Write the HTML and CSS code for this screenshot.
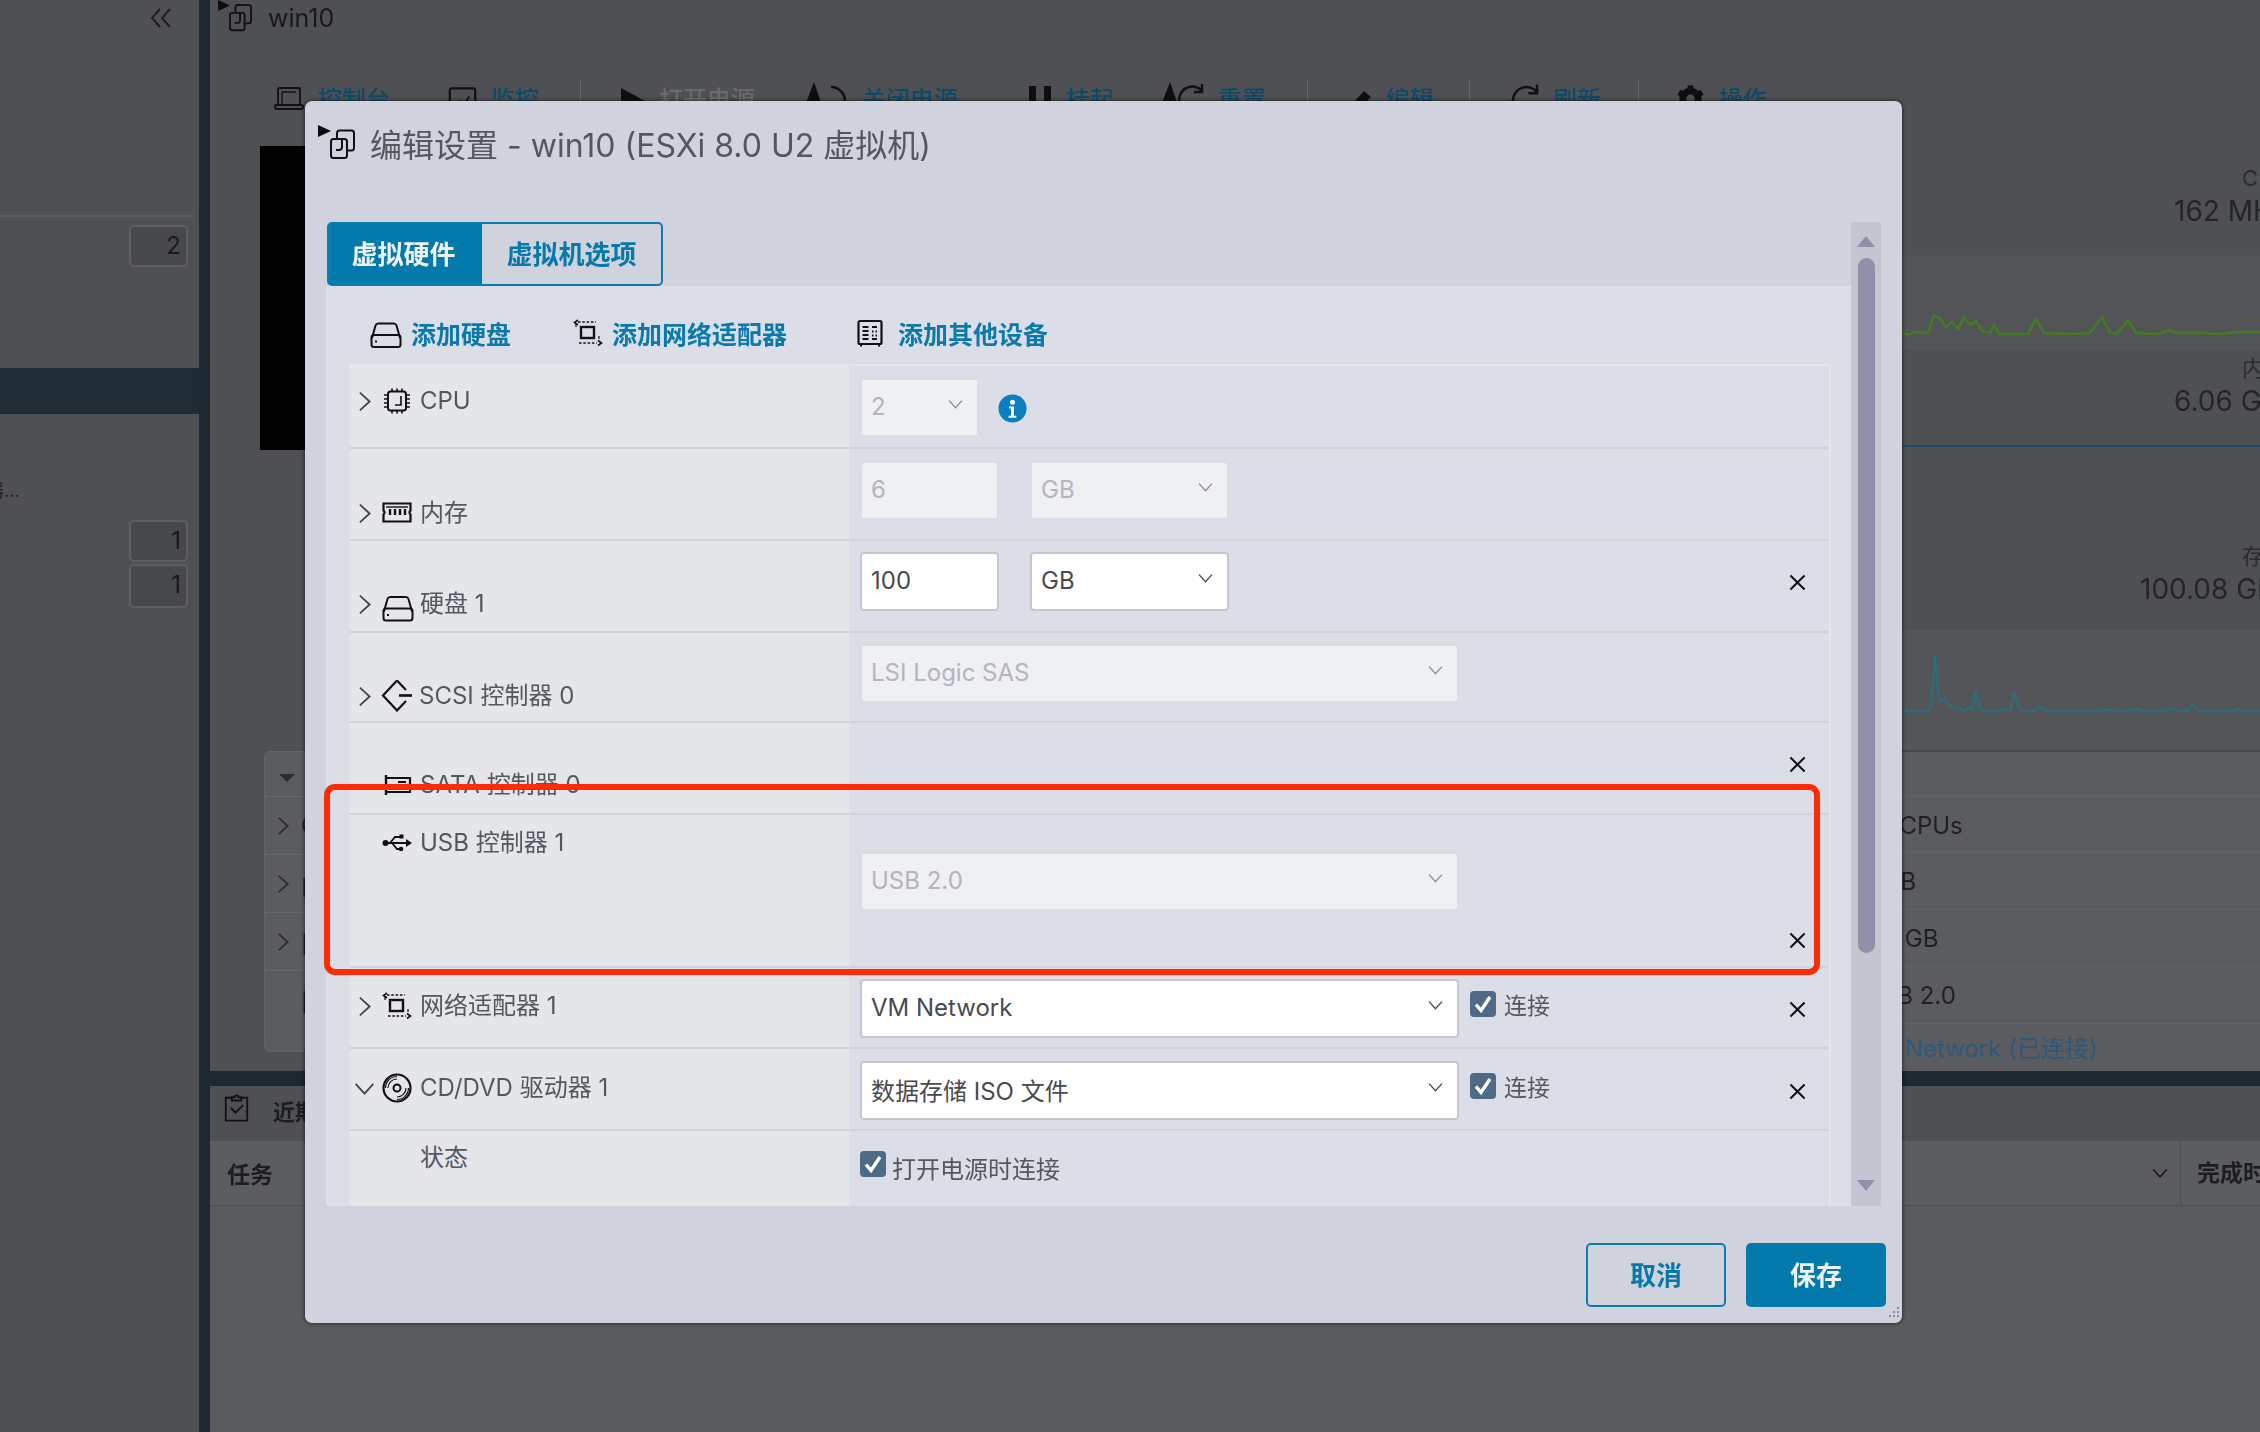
FILE: index.html
```html
<!DOCTYPE html>
<html lang="zh-CN">
<head>
    <meta charset="UTF-8">
    <title>编辑设置 - win10</title>
    <link rel="stylesheet" href="styles.css">
</head>
<body>
    <!-- Icon sprite -->
    <svg class="sprite" xmlns="http://www.w3.org/2000/svg">
        <symbol id="i-vm" viewBox="0 0 37 36">
            <polygon points="0,0 13,6 0,12" fill="#0c0c10" stroke="none"/>
            <path d="M19 13V8a2.5 2.5 0 0 1 2.5-2.5h12A2.5 2.5 0 0 1 36 8v15a2.5 2.5 0 0 1-2.5 2.5H28"/>
            <rect x="13" y="14" width="16" height="19" rx="2.5"/>
            <path d="M24 14v8a3 3 0 0 1-3 3h-3"/>
        </symbol>
        <symbol id="i-hdd" viewBox="0 0 32 26">
            <path d="M2 16L5.5 3.5A3 3 0 0 1 8.400 1.500h15.200a3 3 0 0 1 2.900 2l3.500 12.500"/>
            <rect x="1.500" y="13" width="29" height="12" rx="2.500"/>
            <path d="M5 19.500h2"/>
        </symbol>
        <symbol id="i-net" viewBox="0 0 30 28">
            <rect x="8" y="8" width="13" height="11" stroke-width="2.400"/>
            <path d="M5 3h18" stroke-dasharray="2.500 1.800" stroke-width="1.600"/>
            <path d="M5 1L1.500 3.500 5 6" stroke-width="1.600"/>
            <path d="M6 24h18" stroke-dasharray="2.500 1.800" stroke-width="1.600"/>
            <path d="M25 21.500l3.500 2.500-3.500 2.500" stroke-width="1.600"/>
            <path d="M3 4v4M26 20v-3" stroke-width="1.200"/>
        </symbol>
        <symbol id="i-other" viewBox="0 0 26 28">
            <rect x="1.500" y="2" width="23" height="23" rx="1.500" stroke-width="2.200"/>
            <path d="M5.500 8h6M5.500 12h6M5.500 16h6M5.500 20h6M15 8h5M15 20h5" stroke-width="1.800"/>
            <path d="M15 12.500h1.500M18.500 12.500H20M15 16.500h1.500M18.500 16.500H20" stroke-width="2"/>
            <path d="M4 26v1.500M22 26v1.500" stroke-width="2"/>
        </symbol>
        <symbol id="i-cpu" viewBox="0 0 28 26">
            <rect x="5" y="3.500" width="18" height="19" rx="2.500" stroke-width="2"/>
            <path d="M1 7h4M1 11h4M1 15h4M1 19h4M23 7h4M23 11h4M23 15h4M23 19h4M9 0.500v3M14 0.500v3M19 0.500v3M9 22.500v3M14 22.500v3M19 22.500v3" stroke-width="1.600"/>
            <path d="M18 8v9h-6" stroke-width="1.600"/>
        </symbol>
        <symbol id="i-mem" viewBox="0 0 30 21">
            <path d="M1.500 1.500h27v7a2.500 2.500 0 0 0 0 4v7h-27v-7a2.500 2.500 0 0 0 0-4z" stroke-width="2.200"/>
            <path d="M4 5h22" stroke-width="1.400"/>
            <path d="M8 7v6M13 7v6M18 7v6M23 7v6" stroke-width="2.400"/>
        </symbol>
        <symbol id="i-scsi" viewBox="0 0 32 33">
            <path d="M16 1.500L2 16.500l14 15 9-9.500M25 11L16 1.500" stroke-width="2.200"/>
            <path d="M18 16.500h13" stroke-width="2.600"/>
        </symbol>
        <symbol id="i-sata" viewBox="0 0 28 22">
            <path d="M3 1v20" stroke-width="2.400"/>
            <path d="M3 4h24v14H3" stroke-width="2.200"/>
            <path d="M15 8h8M15 11.500h8" stroke-width="2"/>
        </symbol>
        <symbol id="i-usb" viewBox="0 0 30 20">
            <circle cx="3.500" cy="10" r="3" fill="#111" stroke="none"/>
            <path d="M3 10h23" stroke-width="2"/>
            <polygon points="24,6 30,10 24,14" fill="#111" stroke="none"/>
            <path d="M8 10l5-6h5M10 10l5 6h3" stroke-width="1.800"/>
            <rect x="17.500" y="1.500" width="4" height="4" fill="#111" stroke="none"/>
            <circle cx="19" cy="16" r="2.300" fill="#111" stroke="none"/>
        </symbol>
        <symbol id="i-cd" viewBox="0 0 30 30">
            <circle cx="15" cy="15" r="13.500" stroke-width="2.200"/>
            <circle cx="15" cy="15" r="3.500" stroke-width="2"/>
            <path d="M15 6a9 9 0 0 0-9 9M15 3.500A11.500 11.500 0 0 0 3.500 15M15 24a9 9 0 0 0 9-9M15 26.500A11.500 11.500 0 0 0 26.500 15" stroke-width="1.200"/>
        </symbol>
        <symbol id="i-right" viewBox="0 0 14 22"><path d="M2 1.500L12.500 11 2 20.500"/></symbol>
        <symbol id="i-down" viewBox="0 0 22 14"><path d="M1.500 2L11 12.500 20.500 2"/></symbol>
        <symbol id="i-x" viewBox="0 0 18 18"><path d="M1.500 1.500l15 15M16.500 1.500l-15 15" stroke-width="2.200"/></symbol>
        <symbol id="i-check" viewBox="0 0 26 26"><path d="M6 13.500l5 6L20 6" stroke="#fff" stroke-width="3.400"/></symbol>
        <symbol id="i-info" viewBox="0 0 30 30">
            <circle cx="15" cy="15" r="14.500" fill="#0b7fbd" stroke="none"/>
            <circle cx="15" cy="8.500" r="2.600" fill="#fff" stroke="none"/>
            <path d="M11.500 13h5v9.500h2.500v2h-8v-2h2.500V15h-2z" fill="#fff" stroke="none"/>
        </symbol>
        <symbol id="i-laptop" viewBox="0 0 30 23">
            <path d="M4 18V2.500A1.500 1.500 0 0 1 5.500 1h19A1.500 1.500 0 0 1 26 2.500V18" stroke-width="1.800"/>
            <path d="M8 5h14M8 5v13" stroke-width="1.300"/>
            <rect x="1" y="18" width="28" height="4" rx="1.500" stroke-width="1.800"/>
        </symbol>
        <symbol id="i-chart" viewBox="0 0 30 34">
            <rect x="1.500" y="1.500" width="27" height="31" rx="2" stroke-width="2.400"/>
            <path d="M7 24l5-9 4 6 6-11" stroke-width="2"/>
        </symbol>
        <symbol id="i-play" viewBox="0 0 24 30"><polygon points="0,2 24,15 0,28" fill="#0f0f12" stroke="none"/></symbol>
        <symbol id="i-off" viewBox="0 0 44 30">
            <polygon points="0,26 10,0 19,26" fill="#0f0f12" stroke="none"/>
            <path d="M27 5a14 14 0 0 1 14 14v6" stroke-width="2.400"/>
            <path d="M24 4v22" stroke-width="0"/>
        </symbol>
        <symbol id="i-pause" viewBox="0 0 22 30"><path d="M3.500 0v30M18.500 0v30" stroke="#0f0f12" stroke-width="7"/></symbol>
        <symbol id="i-reset" viewBox="0 0 44 30">
            <polygon points="0,26 10,0 19,26" fill="#0f0f12" stroke="none"/>
            <path d="M20 22a13 13 0 0 1 22-13" stroke-width="2.400"/>
            <path d="M42 2v8h-8" stroke-width="2.400"/>
        </symbol>
        <symbol id="i-pen" viewBox="0 0 24 30"><path d="M2 27l2-9L16 5l7 6-13 13z" fill="#0f0f12" stroke="none"/></symbol>
        <symbol id="i-refresh" viewBox="0 0 30 30">
            <path d="M3 28V18a14 14 0 0 1 25-9" stroke-width="2.600"/>
            <path d="M28 1v9h-9" stroke-width="2.600"/>
        </symbol>
        <symbol id="i-gear" viewBox="0 0 30 30">
            <circle cx="15" cy="16" r="8" fill="none" stroke="#0f0f12" stroke-width="7"/>
            <path d="M15 2v6M3 9l5 3M27 9l-5 3M3 23l5-3M27 23l-5-3" stroke="#0f0f12" stroke-width="6"/>
        </symbol>
        <symbol id="i-tasks" viewBox="0 0 26 30">
            <path d="M8 4H1.500v24.500h23V4H18" stroke-width="2"/>
            <path d="M8 7V3.500h3a2 2 0 0 1 4 0h3V7z" stroke-width="2"/>
            <path d="M7 15l5 5 8-8" stroke-width="2"/>
        </symbol>
    </svg>

    <!-- Sidebar -->
    <aside class="sidebar">
        <div class="collapse">
            <svg class="stroke" width="22" height="20" viewBox="0 0 22 20"><path d="M10 1L2 10l8 9M20 1l-8 9 8 9"/></svg>
        </div>
        <div class="side-line"></div>
        <span class="side-badge">2</span>
        <div class="side-selected"></div>
        <div class="side-text">器...</div>
        <span class="side-badge side-badge-a">1</span>
        <span class="side-badge side-badge-b">1</span>
    </aside>
    <div class="divider"></div>

    <main class="main">
        <section class="vm-view">
            <div class="vm-head">
                <svg class="stroke vm-icon"><use href="#i-vm"/></svg>
                <span>win10</span>
            </div>
            <div class="toolbar">
                <div class="tool first"><svg class="stroke t-laptop"><use href="#i-laptop"/></svg><span>控制台</span></div>
                <div class="tool monitor"><svg class="stroke t-chart"><use href="#i-chart"/></svg><span>监控</span></div>
                <div class="tool-sep"></div>
                <div class="tool off"><svg class="stroke t-play"><use href="#i-play"/></svg><span>打开电源</span></div>
                <div class="tool power"><svg class="stroke t-wide"><use href="#i-off"/></svg><span>关闭电源</span></div>
                <div class="tool wide"><svg class="stroke t-play"><use href="#i-pause"/></svg><span>挂起</span></div>
                <div class="tool"><svg class="stroke t-wide"><use href="#i-reset"/></svg><span>重置</span></div>
                <div class="tool-sep"></div>
                <div class="tool off-blue"><svg class="stroke t-play"><use href="#i-pen"/></svg><span>编辑</span></div>
                <div class="tool-sep sep-refresh"></div>
                <div class="tool off-blue"><svg class="stroke t-round"><use href="#i-refresh"/></svg><span>刷新</span></div>
                <div class="tool-sep sep-gear"></div>
                <div class="tool off-blue"><svg class="stroke t-round"><use href="#i-gear"/></svg><span>操作</span></div>
            </div>
            <div class="vm-body">
                <div class="vm-left">
                    <div class="console-preview"></div>
                    <div class="hw-panel">
                        <div class="hw-head"><span class="tri"></span></div>
                        <div class="hw-row"><svg class="stroke"><use href="#i-right"/></svg><span>CPU</span></div>
                        <div class="hw-row"><svg class="stroke"><use href="#i-right"/></svg><span>内存</span></div>
                        <div class="hw-row"><svg class="stroke"><use href="#i-right"/></svg><span>[硬盘</span></div>
                        <div class="hw-row"><span class="hw-blank">[网络</span></div>
                    </div>
                </div>
                <div class="vm-stats">
                    <div class="stat stat-cpu"><small>CPU</small><b>162 MHz</b></div>
                    <div class="chart chart-cpu">
                        <svg width="358" height="40" viewBox="0 0 358 40"><polyline class="line-green" points="0,28 6,30 12,27 26,28 32,10 38,13 44,22 50,17 56,24 62,12 68,20 74,16 80,26 88,28 92,20 97,29 126,29 134,14 142,28 168,29 188,28 200,12 208,28 216,28 226,15 234,28 258,29 266,25 274,28 300,28 320,29 335,27 358,27"/></svg>
                    </div>
                    <div class="stat stat-mem"><small>内存</small><b>6.06 GB</b></div>
                    <div class="chart chart-mem"></div>
                    <div class="stat stat-disk"><small>存储</small><b>100.08 GB</b></div>
                    <div class="chart chart-disk">
                        <svg width="358" height="122" viewBox="0 0 358 122"><polyline class="line-teal" points="2,81 26,81 29,76 33,25 36,62 38,71 43,68 48,76 54,79 58,78 62,81 66,78 70,80 74,62 78,78 82,81 94,81 100,79 108,81 112,64 118,81 132,81 138,77 146,81 190,81 204,80 226,81 236,79 242,81 262,81 268,78 278,81 286,81 290,73 296,81 330,81 336,79 342,81 358,81"/></svg>
                    </div>
                    <div class="info-table">
                        <div class="info-row info-top"></div>
                        <div class="info-row info-cpu">2 CPUs</div>
                        <div class="info-row info-mem">6 GB</div>
                        <div class="info-row info-disk">100 GB</div>
                        <div class="info-row info-usb">USB 2.0</div>
                        <div class="info-row info-link">VM Network (已连接)</div>
                    </div>
                </div>
            </div>
        </section>
        <div class="hbar"></div>
        <section class="tasks">
            <div class="tasks-head">
                <svg class="stroke t-tasks"><use href="#i-tasks"/></svg>
                <span>近期任务</span>
            </div>
            <div class="tasks-cols">
                <span>任务</span>
                <svg class="stroke tasks-chevron"><use href="#i-down"/></svg>
                <span class="tasks-done">完成时间</span>
            </div>
        </section>
    </main>

    <!-- Edit settings dialog -->
    <div class="modal">
        <div class="modal-title">
            <svg class="stroke modal-icon"><use href="#i-vm"/></svg>
            <span>编辑设置 - win10 (ESXi 8.0 U2 虚拟机)</span>
        </div>
        <div class="modal-body">
            <div class="modal-main">
                <div class="tabs">
                    <div class="tab active">虚拟硬件</div>
                    <div class="tab">虚拟机选项</div>
                </div>
                <div class="panel">
                    <div class="add-bar">
                        <a class="add-link link-disk"><svg class="stroke"><use href="#i-hdd"/></svg>添加硬盘</a>
                        <a class="add-link link-net"><svg class="stroke"><use href="#i-net"/></svg>添加网络适配器</a>
                        <a class="add-link link-other"><svg class="stroke"><use href="#i-other"/></svg>添加其他设备</a>
                    </div>
                    <div class="table">
                        <div class="row r-cpu">
                            <div class="cell-label"><svg class="stroke arrow"><use href="#i-right"/></svg><svg class="stroke dev dev-cpu"><use href="#i-cpu"/></svg><span>CPU</span></div>
                            <div class="cell-ctrl">
                                <div class="select off sel-cpu">2<svg class="stroke chev"><use href="#i-down"/></svg></div>
                                <svg class="info"><use href="#i-info"/></svg>
                            </div>
                        </div>
                        <div class="row r-mem">
                            <div class="cell-label"><svg class="stroke arrow"><use href="#i-right"/></svg><svg class="stroke dev dev-mem"><use href="#i-mem"/></svg><span>内存</span></div>
                            <div class="cell-ctrl">
                                <div class="select off sel-num">6</div>
                                <div class="select off sel-unit">GB<svg class="stroke chev"><use href="#i-down"/></svg></div>
                            </div>
                        </div>
                        <div class="row r-disk">
                            <div class="cell-label"><svg class="stroke arrow"><use href="#i-right"/></svg><svg class="stroke dev dev-hdd"><use href="#i-hdd"/></svg><span>硬盘 1</span></div>
                            <div class="cell-ctrl">
                                <div class="select sel-num">100</div>
                                <div class="select sel-unit">GB<svg class="stroke chev"><use href="#i-down"/></svg></div>
                                <svg class="stroke del"><use href="#i-x"/></svg>
                            </div>
                        </div>
                        <div class="row r-scsi">
                            <div class="cell-label"><svg class="stroke arrow"><use href="#i-right"/></svg><svg class="stroke dev dev-scsi"><use href="#i-scsi"/></svg><span>SCSI 控制器 0</span></div>
                            <div class="cell-ctrl">
                                <div class="select off sel-long">LSI Logic SAS<svg class="stroke chev"><use href="#i-down"/></svg></div>
                            </div>
                        </div>
                        <div class="row r-sata">
                            <div class="cell-label"><svg class="arrow"></svg><svg class="stroke dev dev-sata"><use href="#i-sata"/></svg><span>SATA 控制器 0</span></div>
                            <div class="cell-ctrl">
                                <svg class="stroke del"><use href="#i-x"/></svg>
                            </div>
                        </div>
                        <div class="row r-usb">
                            <div class="cell-label"><svg class="arrow"></svg><svg class="stroke dev dev-usb"><use href="#i-usb"/></svg><span>USB 控制器 1</span></div>
                            <div class="cell-ctrl">
                                <div class="select off sel-long">USB 2.0<svg class="stroke chev"><use href="#i-down"/></svg></div>
                                <svg class="stroke del"><use href="#i-x"/></svg>
                            </div>
                        </div>
                        <div class="row r-net">
                            <div class="cell-label"><svg class="stroke arrow"><use href="#i-right"/></svg><svg class="stroke dev dev-net"><use href="#i-net"/></svg><span>网络适配器 1</span></div>
                            <div class="cell-ctrl">
                                <div class="select sel-long">VM Network<svg class="stroke chev"><use href="#i-down"/></svg></div>
                                <label class="check-label"><span class="check"><svg><use href="#i-check"/></svg></span>连接</label>
                                <svg class="stroke del"><use href="#i-x"/></svg>
                            </div>
                        </div>
                        <div class="row r-cd">
                            <div class="cell-label"><svg class="stroke arrow arrow-down"><use href="#i-down"/></svg><svg class="stroke dev dev-cd"><use href="#i-cd"/></svg><span>CD/DVD 驱动器 1</span></div>
                            <div class="cell-ctrl">
                                <div class="select sel-long">数据存储 ISO 文件<svg class="stroke chev"><use href="#i-down"/></svg></div>
                                <label class="check-label"><span class="check"><svg><use href="#i-check"/></svg></span>连接</label>
                                <svg class="stroke del"><use href="#i-x"/></svg>
                            </div>
                        </div>
                        <div class="row r-state">
                            <div class="cell-label"><span>状态</span></div>
                            <div class="cell-ctrl">
                                <label class="check-label check-wide"><span class="check"><svg><use href="#i-check"/></svg></span>打开电源时连接</label>
                            </div>
                        </div>
                    </div>
                </div>
            </div>
            <div class="scrollbar">
                <span class="scroll-up"></span>
                <div class="scroll-thumb"></div>
                <span class="scroll-down"></span>
            </div>
        </div>
        <div class="modal-foot">
            <button class="btn btn-line">取消</button>
            <button class="btn btn-fill">保存</button>
        </div>
        <svg class="grip" width="14" height="14" viewBox="0 0 14 14"><path d="M11 2h2v2h-2zM7 6h2v2H7zM11 6h2v2h-2zM3 10h2v2H3zM7 10h2v2H7zM11 10h2v2h-2z" fill="#8a8c99"/></svg>
    </div>

    <!-- Annotation drawn over the screenshot -->
    <div class="callout"></div>
</body>
</html>
```
FILE: styles.css
```css
:root {
    --page: #4f5054;
    --page-light: #5b5c60;
    --bar: #1c2932;
    --dialog: #d0d2dd;
    --panel: #dcdee7;
    --label-bg: #e5e6ea;
    --line: #d2d3da;
    --blue: #0479ab;
    --text: #55575f;
}

* {
    box-sizing: border-box;
}

html, body {
    margin: 0;
    height: 100%;
}

body {
    width: 2260px;
    height: 1432px;
    overflow: hidden;
    position: relative;
    display: flex;
    background-color: var(--page);
    font-family: Inter, "Noto Sans CJK SC", sans-serif;
    font-size: 24px;
    color: #1f2023;
    filter: blur(0.5px);
}

.sprite {
    display: none;
}

.stroke {
    fill: none;
    stroke: #111114;
    stroke-width: 2;
}

/* Sidebar */
.sidebar {
    width: 199px;
    flex: none;
    display: flex;
    flex-direction: column;
    overflow: hidden;
}

.collapse {
    height: 215px;
    padding: 5px 0 0 150px;
}

.collapse svg {
    stroke: #1d1e21;
}

.side-line {
    width: 194px;
    height: 2px;
    background-color: #5c5d61;
}

.side-badge {
    align-self: flex-end;
    width: 59px;
    height: 42px;
    margin: 8px 11px 0 0;
    padding-right: 5px;
    text-align: right;
    line-height: 38px;
    border: 2px solid #5d5e62;
    border-radius: 5px;
    background-color: #47484c;
    font-size: 24px;
    color: #17181a;
}

.side-selected {
    height: 46px;
    margin-top: 101px;
    background-color: #1f2c35;
}

.side-text {
    height: 30px;
    margin: 62px 0 0 -14px;
    font-size: 18px;
    color: #222;
}

.side-badge-a {
    margin-top: 14px;
}

.side-badge-b {
    height: 44px;
    margin-top: 2px;
}

.divider {
    width: 11px;
    flex: none;
    background-color: var(--bar);
}

/* Page behind the dialog */
.main {
    flex: 1;
    min-width: 0;
    display: flex;
    flex-direction: column;
}

.vm-view {
    height: 1071px;
    overflow: hidden;
    display: flex;
    flex-direction: column;
}

.vm-head {
    height: 80px;
    padding-left: 7px;
    display: flex;
    align-items: flex-start;
    gap: 15px;
    font-size: 25px;
    color: #17181a;
}

.vm-icon {
    width: 36px;
    height: 33px;
    flex: none;
}

.vm-head span {
    line-height: 36px;
}

.toolbar {
    height: 40px;
    padding-left: 64px;
    display: flex;
    align-items: flex-start;
    color: #0e4a67;
    font-weight: 500;
}

.tool {
    display: flex;
    align-items: flex-start;
    gap: 14px;
    margin-left: 46px;
    line-height: 40px;
    white-space: nowrap;
}

.tool.first, .tool.off, .tool.off-blue {
    margin-left: 0;
}

.tool.monitor {
    margin-left: 58px;
}

.tool.power {
    margin-left: 49px;
}

.tool.wide {
    margin-left: 70px;
}

.tool.off span {
    color: #6a6b70;
}

.tool svg {
    flex: none;
}

.tool-sep {
    width: 1px;
    height: 30px;
    margin: 0 40px 0 41px;
    background-color: #66676b;
}

.sep-refresh {
    margin: 0 40px 0 35px;
}

.sep-gear {
    margin: 0 37px 0 37px;
}

.t-laptop {
    width: 30px;
    height: 23px;
    margin-top: 7px;
}

.t-chart {
    width: 29px;
    height: 32px;
    margin-top: 7px;
}

.t-play {
    width: 24px;
    height: 30px;
    margin-top: 6px;
}

.t-wide {
    width: 44px;
    height: 30px;
    margin-top: 2px;
}

.t-round {
    width: 29px;
    height: 30px;
    margin-top: 3px;
}

.vm-body {
    flex: 1;
    min-height: 0;
    display: flex;
}

.vm-left {
    width: 1692px;
    flex: none;
    padding: 26px 0 0 50px;
}

.console-preview {
    width: 100px;
    height: 304px;
    background-color: #000;
}

.hw-panel {
    height: 301px;
    margin: 301px 0 0 4px;
    border: 1px solid #626367;
    border-radius: 6px;
    background-color: var(--page-light);
}

.hw-head {
    height: 44px;
    padding: 22px 0 0 14px;
}

.tri {
    display: block;
    width: 0;
    border-left: 8px solid transparent;
    border-right: 8px solid transparent;
    border-top: 8px solid #2b2c2f;
}

.hw-row {
    height: 58px;
    padding-left: 12px;
    display: flex;
    align-items: center;
    gap: 12px;
    border-top: 1px solid #66676b;
}

.hw-row svg {
    width: 12px;
    height: 22px;
    stroke: #2b2c2f;
}

.hw-blank {
    margin-left: 24px;
}

.vm-stats {
    width: 358px;
    flex: none;
    white-space: nowrap;
}

.stat {
    display: flex;
    flex-direction: column;
    padding-left: 272px;
}

.stat small {
    margin-left: 68px;
    font-size: 22px;
    line-height: 24px;
    color: #2a2b2e;
}

.stat b {
    font-weight: 400;
    font-size: 28px;
    line-height: 34px;
    margin-top: 4px;
    color: #242528;
}

.stat-cpu {
    height: 135px;
    padding-top: 46px;
}

.chart-cpu {
    height: 95px;
    padding-top: 50px;
    background-color: #535458;
}

.stat-mem {
    height: 95px;
    padding-top: 6px;
}

.chart-mem {
    height: 95px;
    border-top: 2px solid #1f4a6b;
}

.stat-disk {
    height: 90px;
    padding: 4px 0 0 238px;
}

.stat-disk small {
    margin-left: 102px;
}

.chart-disk {
    height: 122px;
    background-color: #545558;
    border-bottom: 2px solid #47484c;
}

.chart svg {
    display: block;
    fill: none;
    stroke-width: 2.500;
}

.line-green {
    stroke: #427c20;
}

.line-teal {
    stroke: #2f6b78;
}

.info-table {
    margin-left: -100px;
    background-color: var(--page-light);
}

.info-row {
    height: 57px;
    line-height: 57px;
    border-bottom: 1px solid #626367;
    color: #1f2023;
}

.info-top {
    height: 44px;
}

.info-cpu {
    padding-left: 76px;
    line-height: 60px;
}

.info-mem {
    padding-left: 59px;
}

.info-disk {
    padding-left: 56px;
}

.info-usb {
    padding-left: 62px;
}

.info-link {
    height: 48px;
    line-height: 50px;
    padding-left: 58px;
    border-bottom: none;
    color: #2b5a7c;
}

.hbar {
    height: 15px;
    flex: none;
    background-color: var(--bar);
}

.tasks {
    flex: 1;
    background-color: #5a5b5f;
}

.tasks-head {
    height: 55px;
    padding: 8px 0 0 14px;
    display: flex;
    align-items: flex-start;
    gap: 24px;
    background-color: var(--page);
    font-weight: 600;
    font-size: 22px;
    color: #1c1d20;
}

.t-tasks {
    width: 25px;
    height: 28px;
}

.tasks-cols {
    height: 65px;
    padding-left: 17px;
    display: flex;
    align-items: center;
    background-color: #5c5d61;
    border-bottom: 1px solid #4c4d51;
    font-weight: 700;
    font-size: 23px;
    color: #1c1d20;
}

.tasks-chevron {
    width: 16px;
    height: 10px;
    margin-left: auto;
}

.tasks-done {
    margin-left: 12px;
    padding-left: 16px;
    height: 100%;
    line-height: 64px;
    white-space: nowrap;
    width: 80px;
    overflow: visible;
    border-left: 1px solid #4c4d51;
}

/* Dialog */
.modal {
    position: absolute;
    left: 305px;
    top: 101px;
    width: 1597px;
    height: 1222px;
    display: flex;
    flex-direction: column;
    border-radius: 7px;
    background-color: var(--dialog);
    box-shadow: 0 0 4px rgba(0, 0, 0, 0.7);
}

.modal-title {
    height: 121px;
    flex: none;
    padding: 24px 0 0 13px;
    display: flex;
    align-items: flex-start;
    gap: 15px;
    font-size: 32px;
    line-height: 42px;
    color: #55565e;
}

.modal-icon {
    width: 37px;
    height: 36px;
    flex: none;
}

.modal-body {
    height: 984px;
    flex: none;
    padding-left: 21px;
    display: flex;
}

.modal-main {
    width: 1525px;
    flex: none;
    display: flex;
    flex-direction: column;
    min-height: 0;
}

.tabs {
    width: 336px;
    height: 64px;
    flex: none;
    margin-left: 1px;
    padding-bottom: 3px;
    display: flex;
    border: 2px solid #0b7cb0;
    border-radius: 5px;
    overflow: hidden;
    font-weight: 700;
    font-size: 26px;
    color: var(--blue);
    background: linear-gradient(var(--blue), var(--blue)) left top / 153px 100% no-repeat;
}

.tab {
    flex: 1;
    display: flex;
    align-items: center;
    justify-content: center;
    white-space: nowrap;
}

.tab.active {
    flex: none;
    width: 153px;
    padding-right: 4px;
    color: #edf1f4;
}

.panel {
    flex: 1;
    min-height: 0;
    overflow: hidden;
    background-color: var(--panel);
}

.add-bar {
    height: 78px;
    padding: 34px 0 0 44px;
    display: flex;
    align-items: flex-start;
}

.add-link {
    display: flex;
    align-items: center;
    gap: 9px;
    line-height: 30px;
    font-weight: 700;
    font-size: 25px;
    color: #0a7aad;
    white-space: nowrap;
}

.add-link svg {
    width: 32px;
    height: 26px;
}

.link-net {
    margin-left: 62px;
}

.link-net svg {
    width: 30px;
    height: 28px;
    margin-top: -4px;
}

.link-other {
    margin-left: 70px;
}

.link-other svg {
    width: 26px;
    height: 28px;
    margin: -4px 6px 0 0;
}

.table {
    margin: 0 20px 0 24px;
    border-top: 2px solid #e6e7ee;
    border-right: 2px solid #e3e4ec;
}

.row {
    display: grid;
    grid-template-columns: 499px 1fr;
    border-bottom: 2px solid var(--line);
}

.cell-label {
    display: flex;
    height: 100%;
    align-items: flex-start;
    padding-left: 8px;
    background-color: var(--label-bg);
    color: var(--text);
    line-height: 30px;
    white-space: nowrap;
}

.cell-label span {
    margin-left: 8px;
}

.arrow {
    width: 13px;
    height: 21px;
    margin-top: 5px;
    stroke-width: 2;
    stroke: #45464d;
    flex: none;
}

.arrow-down {
    width: 21px;
    height: 13px;
    margin: 9px -4px 0 -4px;
}

.dev {
    margin-left: 11px;
    flex: none;
    width: 30px;
}

.dev-cpu {
    height: 26px;
    margin-top: 2px;
}

.dev-mem {
    height: 21px;
    margin-top: 4px;
}

.dev-hdd {
    width: 32px;
    height: 27px;
    margin: 6px -2px 0 11px;
}

.dev-scsi {
    height: 33px;
    margin: -2px -2px 0 10px;
    width: 32px;
}

.dev-sata {
    height: 22px;
    margin-top: 4px;
}

.dev-usb {
    height: 20px;
    margin-top: 5px;
}

.dev-net {
    height: 28px;
    margin-top: 1px;
}

.dev-cd {
    height: 30px;
}

.cell-ctrl {
    display: flex;
    align-items: flex-start;
    padding: 11px 23px 0 11px;
}

.select {
    position: relative;
    height: 59px;
    padding: 0 0 2px 9px;
    display: flex;
    align-items: center;
    flex: none;
    border: 2px solid #c6c7cc;
    border-radius: 4px;
    background-color: #fff;
    color: #494a50;
    white-space: nowrap;
}

.select.off {
    border-color: #dcdde1;
    background-color: #eff0f3;
    color: #b4b5ba;
}

.chev {
    position: absolute;
    right: 14px;
    top: 19px;
    width: 15px;
    height: 10px;
    stroke: #4b4c52;
}

.off .chev {
    stroke: #8d8e94;
}

.sel-cpu {
    width: 119px;
}

.sel-num {
    width: 139px;
}

.sel-unit {
    width: 199px;
    margin-left: 31px;
}

.sel-long {
    width: 599px;
}

.info {
    width: 29px;
    height: 29px;
    margin: 16px 0 0 19px;
}

.del {
    width: 17px;
    height: 17px;
    margin: 22px 0 0 auto;
    flex: none;
    stroke-width: 2;
}

.check-label {
    display: flex;
    align-items: center;
    gap: 8px;
    height: 27px;
    margin: 11px 0 0 11px;
    font-size: 23px;
    color: var(--text);
    white-space: nowrap;
}

.check {
    width: 26px;
    height: 26px;
    flex: none;
    border-radius: 4px;
    background-color: #4e6a85;
}

.check svg {
    display: block;
    width: 26px;
    height: 26px;
    fill: none;
}

.check-wide {
    margin: 11px 0 0 0;
    gap: 6px;
    font-size: 24px;
}

.check-wide .check {
    margin-bottom: 8px;
}

.r-cpu {
    height: 83px;
}

.r-cpu .cell-label {
    padding-top: 20px;
}

.r-cpu .cell-ctrl {
    padding-top: 12px;
}

.r-mem {
    height: 92px;
}

.r-mem .cell-label {
    padding-top: 49px;
}

.r-mem .cell-ctrl {
    padding-top: 12px;
}

.r-disk {
    height: 92px;
}

.r-disk .cell-label {
    padding-top: 48px;
}

.r-scsi {
    height: 90px;
}

.r-scsi .cell-label {
    padding-top: 48px;
}

.r-sata {
    height: 92px;
}

.r-sata .cell-label {
    padding-top: 47px;
}

.r-usb {
    height: 153px;
}

.r-usb .cell-label {
    padding-top: 13px;
}

.r-usb .cell-ctrl {
    padding-top: 37px;
}

.r-usb .del {
    margin-top: 80px;
}

.r-net {
    height: 81px;
}

.r-net .cell-label {
    padding-top: 23px;
}

.r-cd {
    height: 82px;
}

.r-cd .cell-label {
    padding-top: 24px;
}

.r-cd .cell-ctrl {
    padding-top: 12px;
}

.r-state {
    height: 100px;
    border-bottom: none;
}

.r-state .cell-label {
    padding: 12px 0 0 62px;
}

.r-state .cell-ctrl {
    padding-top: 12px;
}

.scrollbar {
    width: 30px;
    flex: none;
    display: flex;
    flex-direction: column;
    align-items: center;
    background-color: #c3c6d1;
    position: relative;
}

.scroll-up {
    width: 0;
    margin-top: 14px;
    border-left: 9px solid transparent;
    border-right: 9px solid transparent;
    border-bottom: 11px solid #8f90a9;
}

.scroll-thumb {
    width: 17px;
    height: 695px;
    margin-top: 11px;
    border-radius: 9px;
    background-color: #8f90a9;
}

.scroll-down {
    width: 0;
    margin-top: auto;
    margin-bottom: 15px;
    border-left: 9px solid transparent;
    border-right: 9px solid transparent;
    border-top: 11px solid #8f90a9;
}

.modal-foot {
    flex: 1;
    padding: 37px 16px 0 0;
    display: flex;
    justify-content: flex-end;
    align-items: flex-start;
    gap: 20px;
}

.btn {
    width: 140px;
    height: 64px;
    padding: 0 0 3px;
    border: 2px solid #0b7cb0;
    border-radius: 5px;
    font-family: inherit;
    font-size: 26px;
    font-weight: 700;
    background-color: transparent;
    color: var(--blue);
}

.btn-fill {
    background-color: var(--blue);
    border-color: var(--blue);
    color: #eef2f5;
}

.grip {
    position: absolute;
    right: 2px;
    bottom: 4px;
}

.callout {
    position: absolute;
    left: 324px;
    top: 784px;
    width: 1496px;
    height: 191px;
    border: 6px solid #ff2b06;
    border-radius: 11px;
}
```
